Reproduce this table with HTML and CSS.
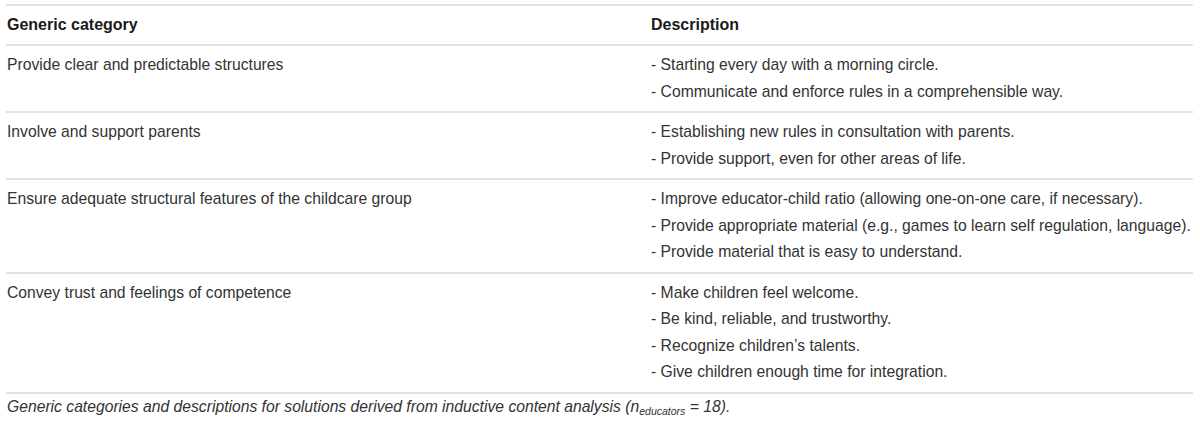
FILE: index.html
```html
<!DOCTYPE html>
<html>
<head>
<meta charset="utf-8">
<link rel="stylesheet" href="styles.css">
</head>
<body>
<div class="wrap">
<table class="tbl">
  <thead>
    <tr><th class="c1">Generic category</th><th class="c2">Description</th></tr>
  </thead>
  <tbody>
    <tr>
      <td class="c1"><div class="item">Provide clear and predictable structures</div></td>
      <td class="c2"><div class="item">- Starting every day with a morning circle.</div><div class="item">- Communicate and enforce rules in a comprehensible way.</div></td>
    </tr>
    <tr>
      <td class="c1"><div class="item">Involve and support parents</div></td>
      <td class="c2"><div class="item">- Establishing new rules in consultation with parents.</div><div class="item">- Provide support, even for other areas of life.</div></td>
    </tr>
    <tr>
      <td class="c1"><div class="item">Ensure adequate structural features of the childcare group</div></td>
      <td class="c2"><div class="item">- Improve educator-child ratio (allowing one-on-one care, if necessary).</div><div class="item">- Provide appropriate material (e.g., games to learn self regulation, language).</div><div class="item">- Provide material that is easy to understand.</div></td>
    </tr>
    <tr>
      <td class="c1"><div class="item">Convey trust and feelings of competence</div></td>
      <td class="c2"><div class="item">- Make children feel welcome.</div><div class="item">- Be kind, reliable, and trustworthy.</div><div class="item">- Recognize children’s talents.</div><div class="item">- Give children enough time for integration.</div></td>
    </tr>
  </tbody>
</table>
<p class="caption">Generic categories and descriptions for solutions derived from inductive content analysis (<i>n</i><sub>educators</sub> = 18).</p>
</div>
</body>
</html>
```
FILE: styles.css
```css
html, body { margin: 0; padding: 0; background: #fff; }
body { font-family: "Liberation Sans", Arial, Helvetica, sans-serif; color: #333; }
.wrap { padding: 4px 7px 0 6px; }
.tbl { width: 100%; border-collapse: collapse; font-size: 15.7px; }
.tbl th, .tbl td { text-align: left; vertical-align: top; padding: 0; }
.tbl thead tr { border-top: 2px solid #e2e2e2; border-bottom: 2px solid #e2e2e2; }
.tbl th { font-weight: bold; font-size: 16px; color: #1a1a1a; height: 38px; vertical-align: middle; padding-left: 1px; }
.tbl tbody tr { border-bottom: 2px solid #e2e2e2; }
.tbl td { padding: 6px 0 6px 1px; }
.tbl .c1 { width: 643px; }
.item { line-height: 26.5px; }
.caption { margin: 3px 0 0 1px; font-size: 15.7px; font-style: italic; color: #333; line-height: 20px; }
.caption sub { font-size: 10.5px; vertical-align: -3px; line-height: 0; }
```
